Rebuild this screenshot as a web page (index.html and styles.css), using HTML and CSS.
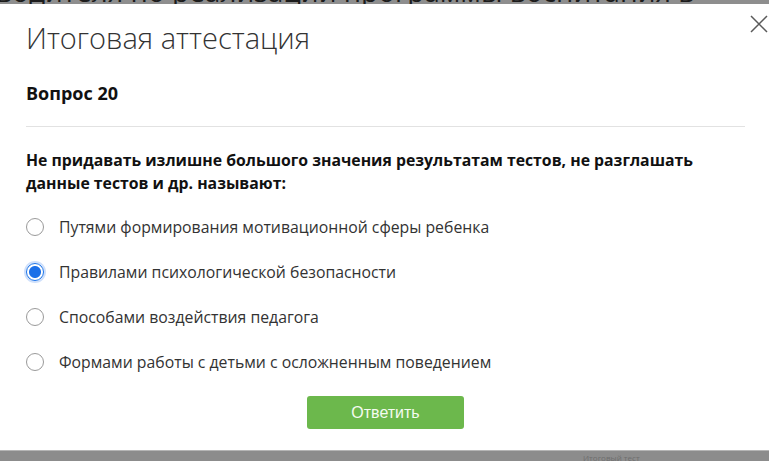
FILE: index.html
```html
<!DOCTYPE html>
<html lang="ru">
<head>
<meta charset="utf-8">
<title>Итоговая аттестация</title>
<link rel="stylesheet" href="styles.css">
</head>
<body>
<div class="page">
  <div class="page-text">водителя по реализации программы воспитания в</div>
  <div class="page-bottom"><span class="bottom-label">Итоговый тест</span></div>
</div>
<div class="modal">
  <button class="close" aria-label="Закрыть">
    <svg width="18" height="18" viewBox="0 0 18 18"><path d="M1 1 L17 17 M17 1 L1 17" stroke="#5a5a5a" stroke-width="1.5" fill="none"/></svg>
  </button>
  <h1 class="title">Итоговая аттестация</h1>
  <h2 class="qnum">Вопрос 20</h2>
  <hr class="divider">
  <p class="question">Не придавать излишне большого значения результатам тестов, не разглашать данные тестов и др. называют:</p>
  <ul class="options">
    <li class="option"><span class="radio"></span><span>Путями формирования мотивационной сферы ребенка</span></li>
    <li class="option"><span class="radio checked"></span><span>Правилами психологической безопасности</span></li>
    <li class="option"><span class="radio"></span><span>Способами воздействия педагога</span></li>
    <li class="option"><span class="radio"></span><span>Формами работы с детьми с осложненным поведением</span></li>
  </ul>
  <div class="actions"><button class="submit">Ответить</button></div>
</div>
</body>
</html>
```
FILE: styles.css
```css
html, body {
  margin: 0;
  padding: 0;
  width: 769px;
  height: 461px;
  overflow: hidden;
  background: #8e8e8e;
  font-family: "Open Sans", "Liberation Sans", sans-serif;
}
.page {
  height: 461px;
  display: flex;
  flex-direction: column;
  justify-content: space-between;
}
.page-text {
  margin-top: -25px;
  margin-left: -4px;
  font-size: 28px;
  line-height: 32px;
  color: #1c1c1c;
  white-space: nowrap;
}
.page-bottom {
  height: 10px;
  border-top: 1px solid #b5b5b5;
  background: #8c8c8c;
  position: relative;
}
.bottom-label {
  position: absolute;
  left: 583px;
  top: 3px;
  font-size: 8px;
  line-height: 8px;
  color: #6e6e6e;
}
.modal {
  position: absolute;
  top: 4px;
  left: 0;
  width: 769px;
  height: 446px;
  background: #fff;
  box-sizing: border-box;
  padding: 14px 24px 0 26px;
}
.close {
  position: absolute;
  top: 11px;
  right: 1px;
  padding: 0;
  border: 0;
  background: none;
  width: 18px;
  height: 18px;
}
.close svg { display: block; }
.title {
  margin: 0;
  font-weight: 300;
  font-size: 29px;
  line-height: 40px;
  color: #333;
}
.qnum {
  margin: 23px 0 0;
  font-size: 18px;
  font-weight: 700;
  line-height: 24px;
  color: #111;
}
.divider {
  margin: 21px 0 0;
  border: 0;
  border-top: 1px solid #e2e2e2;
  height: 0;
}
.question {
  margin: 22px 0 0;
  font-size: 15.8px;
  font-weight: 700;
  line-height: 23px;
  color: #111;
}
.options {
  list-style: none;
  margin: 21px 0 0;
  padding: 0;
  display: flex;
  flex-direction: column;
  gap: 23px;
}
.option {
  display: flex;
  align-items: center;
  gap: 15px;
  font-size: 15.8px;
  line-height: 22px;
  color: #333;
}
.radio {
  width: 16px;
  height: 16px;
  border: 1.5px solid #9a9a9a;
  border-radius: 50%;
  flex: none;
  box-sizing: content-box;
}
.radio.checked {
  border-color: #1a73e8;
  background: radial-gradient(circle, #1a6fe8 0 5.5px, #fff 6.5px);
  box-shadow: 0 0 0 2px #cfe0fb;
}
.actions {
  display: flex;
  justify-content: center;
  margin-top: 23px;
}
.submit {
  width: 157px;
  height: 33px;
  border: 0;
  border-radius: 3px;
  background: #6cb84c;
  color: #f4fbf0;
  font-family: "Liberation Sans", Arial, sans-serif;
  font-size: 16px;
  padding: 0;
}
```
